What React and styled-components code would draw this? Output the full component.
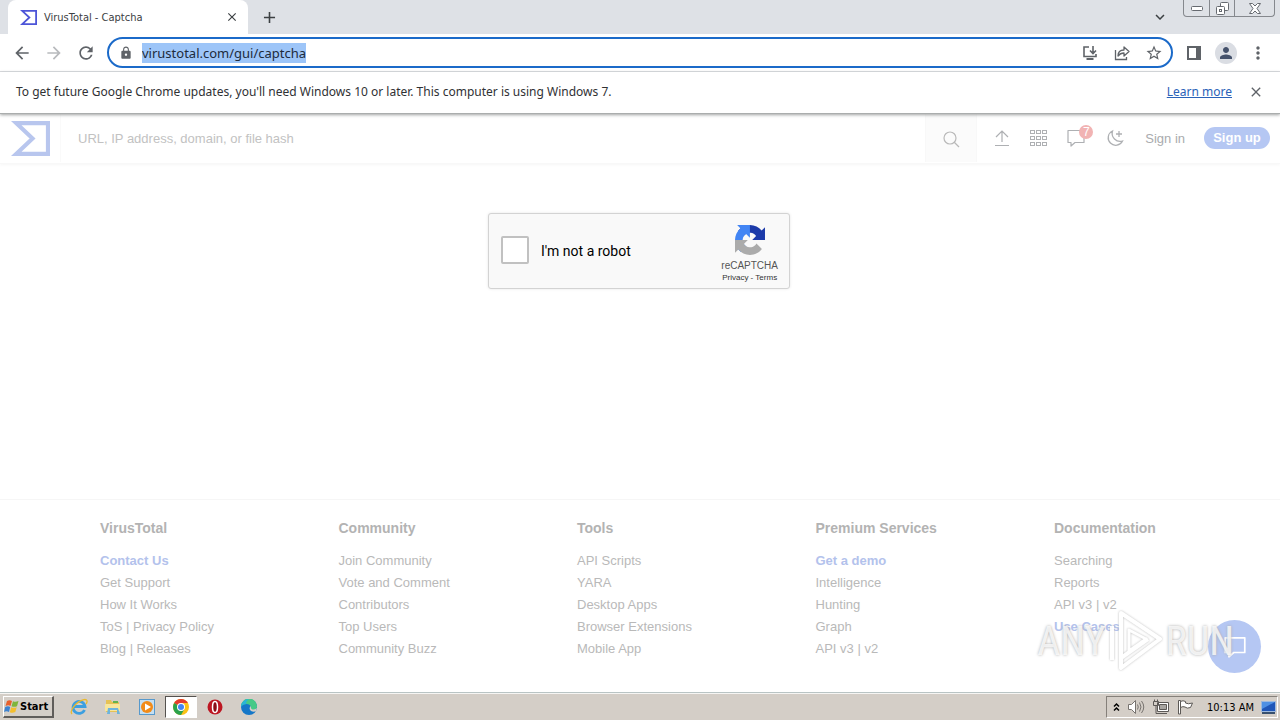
import React from "react";
import styled, { createGlobalStyle } from "styled-components";
import {
    MdArrowBack,
    MdArrowForward,
    MdRefresh,
    MdLock,
    MdStarBorder,
    MdPerson,
    MdMoreVert,
    MdClose,
    MdAdd,
    MdKeyboardArrowDown,
} from "react-icons/md";

const uiFont = '"DejaVu Sans Condensed", "DejaVu Sans", sans-serif';
const barFont = '"Noto Sans", sans-serif';
const webFont = '"Liberation Sans", Arial, sans-serif';

const GlobalStyle = createGlobalStyle`
    * {
        box-sizing: border-box;
    }
    body {
        margin: 0;
        background: #fff;
        font-family: ${webFont};
    }
    button, input {
        font: inherit;
        color: inherit;
        border: 0;
        padding: 0;
        background: none;
        outline: 0;
    }
    a {
        color: inherit;
        text-decoration: none;
    }
    ul {
        list-style: none;
        margin: 0;
        padding: 0;
    }
    svg {
        display: block;
        flex: none;
    }
`;

const Screen = styled.div`
    min-height: 100vh;
    display: flex;
    flex-direction: column;
    position: relative;
`;

/* browser */

const TabStrip = styled.div`
    display: flex;
    align-items: flex-end;
    height: 34px;
    padding: 0 5px 0 8px;
    background: #dee1e6;
    font-family: ${uiFont};
    font-size: 11px;
    color: #3c4043;
`;

const Tab = styled.div`
    display: flex;
    align-items: center;
    gap: 7px;
    width: 240px;
    height: 34px;
    padding: 0 8px 0 12px;
    border-radius: 8px 8px 0 0;
    background: #fff;
`;

const TabTitle = styled.span`
    flex: 1;
    white-space: nowrap;
`;

const IconButton = styled.button`
    display: flex;
    align-items: center;
    justify-content: center;
    width: ${(p) => p.$width || 32}px;
    height: ${(p) => p.$height || 32}px;
    color: ${(p) => p.$color || "#5f6368"};
`;

const Spacer = styled.div`
    flex: 1;
`;

const WindowControls = styled.div`
    display: flex;
    align-self: flex-start;
    margin-left: 7px;
    height: 17px;
    border: 1px solid #85888d;
    border-top: 0;
    border-radius: 0 0 4px 4px;
    button + button {
        border-left: 1px solid #85888d;
    }
`;

const Toolbar = styled.div`
    display: flex;
    align-items: center;
    height: 38px;
    padding: 0 6px;
    border-bottom: 1px solid #dadce0;
    background: #fff;
`;

const AddressBar = styled.div`
    display: flex;
    align-items: center;
    flex: 1;
    height: 31px;
    margin: 0 5px;
    padding: 0 1px;
    border: 2px solid #1b6ac9;
    border-radius: 16px;
`;

const AddressInput = styled.input`
    field-sizing: content;
    height: 20px;
    background: #9dc5f8;
    font-family: ${barFont};
    font-size: 13px;
    color: #202b3c;
`;

const Avatar = styled.span`
    display: flex;
    align-items: center;
    justify-content: center;
    width: 22px;
    height: 22px;
    border-radius: 50%;
    background: #dadde3;
    color: #44516b;
`;

const InfoBar = styled.div`
    display: flex;
    align-items: center;
    justify-content: space-between;
    position: relative;
    z-index: 1;
    height: 42px;
    padding: 0 8px 2px 16px;
    background: #fff;
    border-bottom: 1px solid #aaadad;
    box-shadow: 0 1px 3px #a0a3a3;
    font-family: ${barFont};
    font-size: 12px;
    color: #303134;
`;

const InfoActions = styled.div`
    display: flex;
    align-items: center;
    gap: 8px;
    a {
        color: #2a62b8;
        text-decoration: underline;
    }
`;

/* site */

const SiteHeader = styled.header`
    display: flex;
    align-items: center;
    height: 50px;
    padding: 0 10px 1px 11px;
    border-bottom: 1px solid #f8f8f8;
    box-shadow: 0 1px 3px #f6f6f6;
    font-size: 13px;
    color: #a9abae;
`;

const SearchForm = styled.form`
    display: flex;
    flex: 1;
    height: 48px;
    margin-left: 10px;
    border-left: 1px solid #fafafa;
`;

const SearchInput = styled.input`
    flex: 1;
    padding-left: 17px;
    color: #aaa;
    &::placeholder {
        color: #c2c2c2;
        opacity: 1;
    }
`;

const SearchButton = styled.button`
    display: flex;
    align-items: center;
    justify-content: center;
    width: 52px;
    padding-top: 2px;
    background: #fbfbfb;
    border: solid #f8f8f8;
    border-width: 0 1px;
`;

const HeaderTools = styled.nav`
    display: flex;
    align-items: center;
    padding-left: 7px;
`;

const Bell = styled.span`
    position: relative;
`;

const Badge = styled.span`
    position: absolute;
    top: -4px;
    right: -8px;
    width: 14px;
    height: 14px;
    border-radius: 50%;
    background: #f1b3b3;
    color: #fff;
    font-size: 12px;
    line-height: 14px;
    text-align: center;
`;

const SignIn = styled.a`
    margin: 0 19px 0 11px;
    font-size: 13px;
`;

const SignUp = styled.a`
    width: 66px;
    height: 22px;
    border-radius: 11px;
    background: #b5c7f3;
    color: #fff;
    font-weight: bold;
    font-size: 13px;
    line-height: 22px;
    text-align: center;
`;

const Main = styled.main`
    flex: 1;
    display: flex;
    justify-content: center;
    align-items: flex-start;
    padding: 49px 2px 49px 0;
`;

const Captcha = styled.div`
    display: flex;
    align-items: center;
    width: 302px;
    height: 76px;
    padding: 0 11px 0 12px;
    border: 1px solid #d3d3d3;
    border-radius: 3px;
    background: #f9f9f9;
    box-shadow: 0 0 3px #e6e6e6;
`;

const CaptchaLabel = styled.label`
    display: flex;
    align-items: center;
    gap: 12px;
    flex: 1;
    font-family: Roboto, sans-serif;
    font-size: 14px;
    color: #000;
`;

const Tick = styled.input`
    appearance: none;
    width: 28px;
    height: 28px;
    margin: 0 0 2px;
    border: 2px solid #c1c1c1;
    border-radius: 2px;
    background: #fff;
`;

const CaptchaBrand = styled.div`
    display: flex;
    flex-direction: column;
    align-items: center;
    padding-top: 6px;
    color: #555;
    font-size: 10px;
    line-height: 13px;
    svg {
        margin-bottom: 4px;
    }
    small {
        font-size: 8px;
        line-height: 12px;
        color: #333;
    }
`;

const Footer = styled.footer`
    display: grid;
    grid-template-columns: repeat(4, 1fr) 142px;
    padding: 17px 84px 32px 100px;
    border-top: 1px solid #f6f6f6;
    font-size: 13px;
    line-height: 22px;
    color: #b9b9b9;
    h2 {
        margin: 0 0 11px;
        font-size: 14px;
        line-height: 22px;
        color: #b3b3b3;
    }
`;

const FooterLink = styled.a`
    font-weight: ${(p) => (p.$strong ? "bold" : "normal")};
    color: ${(p) => (p.$strong ? "#b3c2ec" : "inherit")};
`;

const ChatButton = styled.button`
    position: absolute;
    right: 19px;
    bottom: 47px;
    display: flex;
    align-items: center;
    justify-content: center;
    width: 53px;
    height: 53px;
    border-radius: 50%;
    background: #b5c7f3;
    color: #fff;
`;

const Watermark = styled.div`
    position: absolute;
    right: 46px;
    bottom: 46px;
    display: flex;
    align-items: center;
    gap: 2px;
    height: 66px;
    font-family: "Roboto Condensed", Roboto, sans-serif;
    font-size: 40px;
    color: rgba(255, 255, 255, 0.8);
    text-shadow: 0 0 3px #aaa;
    pointer-events: none;
    svg {
        filter: drop-shadow(0 0 1px #b5b5b5);
        opacity: 0.9;
    }
`;

/* taskbar */

const TaskBar = styled.div`
    display: flex;
    align-items: center;
    height: 28px;
    padding: 1px 2px 0 3px;
    background: #d4cec7;
    border-top: 1px solid #b9c4c4;
    box-shadow: inset 0 1px #f6f5f3;
    font-family: ${uiFont};
    font-size: 11px;
    color: #000;
`;

const StartButton = styled.button`
    display: flex;
    align-items: center;
    gap: 1px;
    width: 51px;
    height: 22px;
    margin-right: 9px;
    border: solid;
    border-width: 1px 2px 2px 1px;
    border-color: #fff #605d5a #605d5a #fff;
    font-weight: bold;
    font-size: 11px;
`;

const Launchers = styled.div`
    display: flex;
    gap: 2px;
`;

const Launcher = styled.button`
    display: flex;
    align-items: center;
    justify-content: center;
    width: 32px;
    height: 22px;
    border: ${(p) => (p.$active ? "1px solid" : "0")};
    border-color: #55524f #fff #fff #55524f;
    background: ${(p) => (p.$active ? "#fff" : "none")};
`;

const Tray = styled.div`
    display: flex;
    align-items: center;
    gap: 7px;
    height: 22px;
    padding: 0 1px 0 6px;
    border: 1px solid;
    border-color: #85807a #fff #fff #85807a;
    time {
        margin-left: 6px;
    }
`;

const VtLogo = ({ size, color }) => (
    <svg width={size} height={size} viewBox="0 0 38 38" fill="none" stroke={color} strokeWidth="4">
        <path d="M5 4H36V34H5L21 19Z" />
    </svg>
);

const InstallIcon = () => (
    <svg width="16" height="16" viewBox="0 0 16 16" fill="none" stroke="#5f6368" strokeWidth="1.600">
        <path d="M7 2H2V11.500H14V9M11 1V8M8 5.500L11 8.500L14 5.500" />
        <path d="M4.500 14H11.500" strokeWidth="2" />
    </svg>
);

const ShareIcon = () => (
    <svg width="16" height="16" viewBox="0 0 16 16" fill="none" stroke="#5f6368" strokeWidth="1.300">
        <path d="M1.500 5V14.500H12.500V12" />
        <path d="M4 11C4 7 6.500 5 10 5V2L15 6.500L10 11V8C7.500 8 5.500 9 4 11Z" strokeLinejoin="round" />
    </svg>
);

const SearchIcon = () => (
    <svg width="18" height="18" viewBox="0 0 18 18" fill="none" stroke="#b9b9b9" strokeWidth="1.200">
        <circle cx="8" cy="8" r="6" />
        <path d="M12 12L17 17" />
    </svg>
);

const UploadIcon = () => (
    <svg width="18" height="18" viewBox="0 0 18 18" fill="none" stroke="#aeb0b3" strokeWidth="1.200">
        <path d="M9 13V2M3 8L9 2L15 8M2 16.500H16" />
    </svg>
);

const GridIcon = () => (
    <svg width="18" height="18" viewBox="0 0 18 18" fill="none" stroke="#aeb0b3">
        {[1, 7, 13].map((y) =>
            [1, 7, 13].map((x) => <rect key={x + "-" + y} x={x + 0.5} y={y + 0.5} width="4" height="3" />)
        )}
    </svg>
);

const BubbleIcon = ({ size = 18, width = 1.2 }) => (
    <svg width={size} height={size} viewBox="0 0 18 18" fill="none" stroke="currentColor" strokeWidth={width}>
        <path d="M1 1.500H17V13.500H8L4 17V13.500H1Z" strokeLinejoin="round" />
    </svg>
);

const MoonIcon = () => (
    <svg width="18" height="18" viewBox="0 0 18 18" fill="none" stroke="#aeb0b3" strokeWidth="1.300">
        <path d="M6.500 2A7.500 7.500 0 1 0 16.500 12A8 8 0 0 1 6.500 2ZM13 2V8M10 5H16" />
    </svg>
);

const RecaptchaLogo = () => (
    <svg width="30" height="30" viewBox="0 0 64 64">
        <path fill="#1c3aa9" d="M64 31.955l-.033-1.37V4.687l-7.16 7.16C50.948 4.674 42.033.093 32.05.093c-10.4 0-19.622 4.96-25.458 12.64l11.736 11.86a15.55 15.55 0 0 1 4.754-5.334c2.05-1.6 4.952-2.906 8.968-2.906.485 0 .86.057 1.135.163 4.976.393 9.288 3.14 11.828 7.124l-8.307 8.307L64 31.953" />
        <path fill="#4285f4" d="M31.862.094l-1.37.033H4.594l7.16 7.16C4.58 13.147 0 22.06 0 32.046c0 10.4 4.96 19.622 12.64 25.458L24.5 45.768a15.55 15.55 0 0 1-5.334-4.754c-1.6-2.05-2.906-4.952-2.906-8.968 0-.485.057-.86.163-1.135.393-4.976 3.14-9.288 7.124-11.828l8.307 8.307L31.86.095" />
        <path fill="#ababab" d="M.001 32.045l.033 1.37v25.898l7.16-7.16c5.86 7.173 14.774 11.754 24.76 11.754 10.4 0 19.622-4.96 25.458-12.64l-11.736-11.86a15.55 15.55 0 0 1-4.754 5.334c-2.05 1.6-4.952 2.906-8.968 2.906-.485 0-.86-.057-1.135-.163-4.976-.393-9.288-3.14-11.828-7.124l8.307-8.307c-10.522.04-22.4.066-27.295-.005" />
    </svg>
);

const WindowsFlag = () => (
    <svg width="15" height="15" viewBox="0 0 15 15">
        <path fill="#e8602c" d="M3 2Q5.500 .5 8 2L6.500 7Q4.500 5.500 1.500 7Z" />
        <path fill="#7fb53c" d="M9 2.300Q11.500 3.500 14.500 2L13 7.200Q10 8.500 7.500 7.200Z" />
        <path fill="#3d82d0" d="M1.200 8Q4 6.500 6.200 8L5 13Q2.500 11.500 0 13Z" />
        <path fill="#f4be2e" d="M7.200 8.200Q10 9.500 12.700 8.200L11.300 13Q8.500 14.500 5.800 13.200Z" />
    </svg>
);

const IeIcon = () => (
    <svg width="18" height="18" viewBox="0 0 18 18" fill="none">
        <path d="M14.500 12A6 6 0 1 1 15 8.500H4" stroke="#3c9fe0" strokeWidth="2.800" />
        <path d="M2 16C-1 13 6 4 13 1.800C18 .5 17.500 4 16 6" stroke="#e9b92d" strokeWidth="1.300" />
    </svg>
);

const FolderIcon = () => (
    <svg width="18" height="18" viewBox="0 0 18 18">
        <path fill="#e6c255" d="M2 2H7L8 4H15V14H2Z" />
        <path fill="#f8e69c" d="M1 6H16V13H1Z" />
        <path fill="#6eb4dc" d="M4 10H14L16 16H13V12H6V16H3Z" />
        <path fill="#63b34f" d="M9 3H14V5H9Z" />
    </svg>
);

const PlayerIcon = () => (
    <svg width="16" height="16" viewBox="0 0 16 16">
        <rect x=".5" y=".5" width="15" height="15" fill="#c5dff2" stroke="#5799cc" />
        <circle cx="8" cy="8" r="6" fill="#f28b19" />
        <path fill="#fff" d="M6 4.500L12 8L6 11.500Z" />
    </svg>
);

const ChromeIcon = () => (
    <svg width="16" height="16" viewBox="0 0 16 16">
        <circle cx="8" cy="8" r="8" fill="#fbc116" />
        <path fill="#e33b2e" d="M8 8L1.100 4A8 8 0 0 1 14.900 4H8Z" />
        <path fill="#2ba24c" d="M8 8L1.100 4A8 8 0 0 0 8 16L11.500 10Z" />
        <circle cx="8" cy="8" r="4" fill="#fff" />
        <circle cx="8" cy="8" r="3" fill="#4285f4" />
    </svg>
);

const OperaIcon = () => (
    <svg width="16" height="16" viewBox="0 0 16 16">
        <circle cx="8" cy="8" r="7.500" fill="#bd1622" />
        <ellipse cx="8" cy="8" rx="2.500" ry="5.500" fill="#8c0c16" stroke="#fff" strokeWidth="1.500" />
    </svg>
);

const EdgeIcon = () => (
    <svg width="16" height="16" viewBox="0 0 16 16">
        <circle cx="8" cy="8" r="8" fill="#1577c8" />
        <path fill="#46c987" d="M0 7A8 8 0 0 1 16 8Q15.500 11 12 11Q9 11 10 8.500Q9.500 5 5.500 5Q2 5 0 7Z" />
        <path fill="#29b5d8" d="M0 8A8 8 0 0 1 8 0Q4 3 5.500 5Q2 5 0 8Z" />
        <path fill="#d4cec7" d="M9.500 7Q7.500 10 10 12Q13 13.500 15 12L16 9Q14 11 11.500 10.500Q9.500 10 10 8Z" />
    </svg>
);

const TrayChevrons = () => (
    <svg width="7" height="10" viewBox="0 0 7 10" fill="none" stroke="#000" strokeWidth="1.500">
        <path d="M1 4.500L3.500 2L6 4.500M1 8.500L3.500 6L6 8.500" />
    </svg>
);

const SpeakerIcon = () => (
    <svg width="18" height="16" viewBox="0 0 18 16" fill="none" stroke="#77736f">
        <path d="M1.500 5.500H4.500L8.500 1.500V14.500L4.500 10.500H1.500Z" fill="#fff" />
        <path d="M10.500 5.500Q12 8 10.500 10.500M12.500 3.500Q15.500 8 12.500 12.500M14.500 2Q19 8 14.500 14" />
    </svg>
);

const NetworkIcon = () => (
    <svg width="18" height="16" viewBox="0 0 18 16" stroke="#5c5956">
        <path d="M5.500 3.500H16.500V12.500H5.500Z" fill="#fff" />
        <path d="M7.500 5.500H14.500V10.500H7.500Z" fill="#a8a5a1" />
        <path d="M1.500 2.500H6.500V6.500H1.500ZM2.500 .5V2M5.500 .5V2M4 6.500V14.500H15" fill="none" />
    </svg>
);

const FlagIcon = () => (
    <svg width="17" height="16" viewBox="0 0 17 16" fill="#fff" stroke="#5c5956">
        <path d="M1.500 1.500H3.500V15H1.500Z" />
        <path d="M3.500 2.500Q6 1 8.500 2.500V4Q11 5.500 15.500 4L13.500 8.500Q10 10 8 8Q6 7 3.500 8.500Z" />
    </svg>
);

const DesktopIcon = () => (
    <svg width="15" height="13" viewBox="0 0 15 13">
        <path fill="#1f56b8" stroke="#9db9dd" d="M.5 .5H14.500V10.500H.5Z" />
        <path fill="#4e90e4" d="M1 1H14L1 8Z" />
        <path fill="#38506e" d="M1 11H14V13H1Z" />
    </svg>
);

const columns = [
    {
        title: "VirusTotal",
        links: ["Contact Us", "Get Support", "How It Works", "ToS | Privacy Policy", "Blog | Releases"],
        strong: "Contact Us",
    },
    {
        title: "Community",
        links: ["Join Community", "Vote and Comment", "Contributors", "Top Users", "Community Buzz"],
    },
    {
        title: "Tools",
        links: ["API Scripts", "YARA", "Desktop Apps", "Browser Extensions", "Mobile App"],
    },
    {
        title: "Premium Services",
        links: ["Get a demo", "Intelligence", "Hunting", "Graph", "API v3 | v2"],
        strong: "Get a demo",
    },
    {
        title: "Documentation",
        links: ["Searching", "Reports", "API v3 | v2", "Use Cases"],
        strong: "Use Cases",
    },
];

function Browser() {
    return (
        <>
            <TabStrip>
                <Tab>
                    <VtLogo size={17} color="#4d55d8" />
                    <TabTitle>VirusTotal - Captcha</TabTitle>
                    <IconButton $width={16} $color="#3c4043" aria-label="Close tab"><MdClose size={14} /></IconButton>
                </Tab>
                <IconButton $width={43} $height={34} $color="#3c4043" aria-label="New tab"><MdAdd size={19} /></IconButton>
                <Spacer />
                <IconButton $height={34} $color="#3c4043" aria-label="Search tabs"><MdKeyboardArrowDown size={18} /></IconButton>
                <WindowControls>
                    <IconButton $width={25} $height={16} aria-label="Minimize">
                        <svg width="12" height="5" viewBox="0 0 12 5" fill="#fff" stroke="#666a70">
                            <rect x=".5" y=".5" width="11" height="4" rx="1" />
                        </svg>
                    </IconButton>
                    <IconButton $width={25} $height={16} aria-label="Restore">
                        <svg width="13" height="13" viewBox="0 0 13 13" fill="#fff" stroke="#666a70">
                            <rect x="4.500" y=".5" width="8" height="8" rx="1" />
                            <rect x=".5" y="4.500" width="8" height="8" rx="1" />
                            <rect x="3.500" y="7.500" width="2" height="2" />
                        </svg>
                    </IconButton>
                    <IconButton $width={40} $height={16} aria-label="Close">
                        <svg width="12" height="11" viewBox="0 0 12 11" fill="#fff" stroke="#666a70">
                            <path d="M.5 .5H3.500L6 3L8.500 .5H11.500L8 5.500L11.500 10.500H8.500L6 8L3.500 10.500H.5L4 5.500Z" />
                        </svg>
                    </IconButton>
                </WindowControls>
            </TabStrip>
            <Toolbar>
                <IconButton aria-label="Back"><MdArrowBack size={20} /></IconButton>
                <IconButton $color="#b8babd" aria-label="Forward"><MdArrowForward size={20} /></IconButton>
                <IconButton aria-label="Reload"><MdRefresh size={20} /></IconButton>
                <AddressBar>
                    <IconButton $height={27} aria-label="Site information"><MdLock size={14} /></IconButton>
                    <AddressInput aria-label="Address" defaultValue="virustotal.com/gui/captcha" />
                    <Spacer />
                    <IconButton $height={27} aria-label="Install"><InstallIcon /></IconButton>
                    <IconButton $height={27} aria-label="Share"><ShareIcon /></IconButton>
                    <IconButton $height={27} aria-label="Bookmark"><MdStarBorder size={18} /></IconButton>
                </AddressBar>
                <IconButton aria-label="Side panel">
                    <svg width="14" height="14" viewBox="0 0 14 14">
                        <path fill="none" stroke="#5f6368" strokeWidth="2" d="M1 1H13V13H1Z" />
                        <path fill="#5f6368" d="M9 1H13V13H9Z" />
                    </svg>
                </IconButton>
                <IconButton aria-label="Profile"><Avatar><MdPerson size={18} /></Avatar></IconButton>
                <IconButton aria-label="Menu"><MdMoreVert size={20} /></IconButton>
            </Toolbar>
            <InfoBar>
                <span>To get future Google Chrome updates, you'll need Windows 10 or later. This computer is using Windows 7.</span>
                <InfoActions>
                    <a href="#learn">Learn more</a>
                    <IconButton aria-label="Dismiss"><MdClose size={16} /></IconButton>
                </InfoActions>
            </InfoBar>
        </>
    );
}

function App() {
    return (
        <Screen>
            <GlobalStyle />
            <Browser />
            <SiteHeader>
                <VtLogo size={39} color="#b8c6ee" />
                <SearchForm>
                    <SearchInput aria-label="Search" placeholder="URL, IP address, domain, or file hash" />
                    <SearchButton type="button" aria-label="Search"><SearchIcon /></SearchButton>
                </SearchForm>
                <HeaderTools>
                    <IconButton $width={36} aria-label="Upload"><UploadIcon /></IconButton>
                    <IconButton $width={36} aria-label="Apps"><GridIcon /></IconButton>
                    <IconButton $width={40} $color="#aeb0b3" aria-label="Notifications">
                        <Bell>
                            <BubbleIcon />
                            <Badge>7</Badge>
                        </Bell>
                    </IconButton>
                    <IconButton $width={38} aria-label="Dark theme"><MoonIcon /></IconButton>
                    <SignIn href="#signin">Sign in</SignIn>
                    <SignUp href="#signup">Sign up</SignUp>
                </HeaderTools>
            </SiteHeader>
            <Main>
                <Captcha>
                    <CaptchaLabel>
                        <Tick type="checkbox" />
                        I'm not a robot
                    </CaptchaLabel>
                    <CaptchaBrand>
                        <RecaptchaLogo />
                        reCAPTCHA
                        <small><a href="#privacy">Privacy</a> - <a href="#terms">Terms</a></small>
                    </CaptchaBrand>
                </Captcha>
            </Main>
            <Footer>
                {columns.map((column) => (
                    <section key={column.title}>
                        <h2>{column.title}</h2>
                        <ul>
                            {column.links.map((link) => (
                                <li key={link}>
                                    <FooterLink href="#footer" $strong={link === column.strong}>{link}</FooterLink>
                                </li>
                            ))}
                        </ul>
                    </section>
                ))}
            </Footer>
            <ChatButton aria-label="Open chat"><BubbleIcon size={22} width={1.4} /></ChatButton>
            <Watermark>
                <span>ANY</span>
                <svg width="56" height="66" viewBox="0 0 56 66" fill="none" stroke="#fff" strokeWidth="4" strokeLinejoin="round">
                    <path d="M4 18V52M13 52V5L52 31L13 60L13 50L40 31" />
                    <path d="M21 22V43L38 31Z" strokeWidth="3" />
                </svg>
                <span>RUN</span>
            </Watermark>
            <TaskBar>
                <StartButton><WindowsFlag />Start</StartButton>
                <Launchers>
                    <Launcher aria-label="Internet Explorer"><IeIcon /></Launcher>
                    <Launcher aria-label="Explorer"><FolderIcon /></Launcher>
                    <Launcher aria-label="Media Player"><PlayerIcon /></Launcher>
                    <Launcher $active aria-label="Chrome"><ChromeIcon /></Launcher>
                    <Launcher aria-label="Opera"><OperaIcon /></Launcher>
                    <Launcher aria-label="Edge"><EdgeIcon /></Launcher>
                </Launchers>
                <Spacer />
                <Tray>
                    <TrayChevrons />
                    <SpeakerIcon />
                    <NetworkIcon />
                    <FlagIcon />
                    <time>10:13 AM</time>
                    <DesktopIcon />
                </Tray>
            </TaskBar>
        </Screen>
    );
}

export default App;
